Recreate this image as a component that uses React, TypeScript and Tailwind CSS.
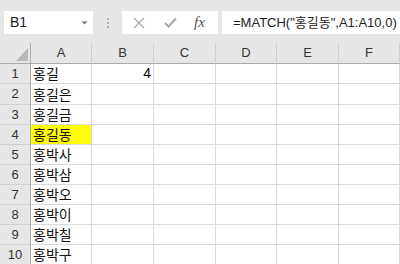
import React from "react";

const columns = ["A", "B", "C", "D", "E", "F"];

const names = [
  "홍길",
  "홍길은",
  "홍길금",
  "홍길동",
  "홍박사",
  "홍박삼",
  "홍박오",
  "홍박이",
  "홍박칠",
  "홍박구",
];

const cellFont = {
  fontFamily: '"Noto Sans CJK KR", "Noto Sans", sans-serif',
};

const Toolbar = () => {
  return (
    <div className="h-[43px] bg-[#e6e6e6] flex items-start pt-[11px] pl-[4px]">
      <div className="w-[89px] h-[23px] bg-white flex items-center justify-between pl-[6px] pr-[5px]">
        <span className="text-[14px] text-[#222] font-['Liberation_Sans',sans-serif]">
          B1
        </span>
        <svg width="7" height="4" viewBox="0 0 7 4">
          <path d="M0.5 0.5 L3.5 3.5 L6.5 0.5 Z" fill="#777" />
        </svg>
      </div>
      <div className="w-[29px] h-[23px] flex flex-col items-center justify-center gap-[2px]">
        <span className="w-[2px] h-[2px] bg-[#b0b0b0]" />
        <span className="w-[2px] h-[2px] bg-[#b0b0b0]" />
        <span className="w-[2px] h-[2px] bg-[#b0b0b0]" />
      </div>
      <div className="w-[96px] h-[23px] bg-white flex items-center pl-[11px]">
        <svg width="12" height="12" viewBox="0 0 12 12">
          <path d="M1 1 L11 11 M11 1 L1 11" stroke="#a8a8a8" strokeWidth="1.2" />
        </svg>
        <svg width="13" height="11" viewBox="0 0 13 11" className="ml-[19px]">
          <path d="M1 6 L4.5 9.5 L12 1.5" stroke="#a8a8a8" strokeWidth="2" fill="none" />
        </svg>
        <span className="ml-[17px] text-[15px] italic text-[#555] font-['Liberation_Serif',serif] leading-none">
          fx
        </span>
      </div>
      <div className="flex-1 h-[23px] bg-white ml-[4px] flex items-center pl-[11px]">
        <span
          className="text-[13px] text-[#222] whitespace-nowrap"
          style={{ fontFamily: '"Liberation Sans", "Noto Sans CJK KR", sans-serif' }}
        >
          =MATCH("홍길동",A1:A10,0)
        </span>
      </div>
    </div>
  );
};

const App = () => {
  return (
    <div className="w-[400px] h-[264px] overflow-hidden bg-white">
      <Toolbar />
      <div className="grid grid-cols-[31px_61px_62px_62px_61px_62px_61px]">
        <div className="h-[21px] bg-[#e6e6e6] border-b border-r border-[#ababab] flex items-end justify-end pr-[2px] pb-[2px]">
          <svg width="12" height="13" viewBox="0 0 12 13">
            <path d="M12 0 L12 13 L0 13 Z" fill="#b9b9b9" />
          </svg>
        </div>
        {columns.map((col) => (
          <div
            key={col}
            className="h-[21px] bg-[#e6e6e6] border-b border-b-[#ababab] border-r border-r-[#d0d0d0] flex items-center justify-center text-[13px] text-[#333] font-['Liberation_Sans',sans-serif]"
          >
            {col}
          </div>
        ))}
        {names.map((name, id: number) => {
          const h = id === 1 ? "h-[21px]" : "h-[20px]";
          return (
            <React.Fragment key={id}>
              <div
                className={`${h} bg-[#e6e6e6] border-b border-b-[#d0d0d0] border-r border-r-[#ababab] flex items-center justify-center text-[13px] text-[#333] font-['Liberation_Sans',sans-serif]`}
              >
                {id + 1}
              </div>
              <div
                className={`${h} ${id === 3 ? "bg-[#ffff00]" : "bg-white"} border-b border-r border-[#dadada] flex items-center pl-[2px] text-[14px] text-[#111]`}
                style={cellFont}
              >
                {name}
              </div>
              <div
                className={`${h} border-b border-r border-[#dadada] flex items-center justify-end pr-[2px] text-[14px] text-black font-['Liberation_Sans',sans-serif]`}
              >
                {id === 0 ? "4" : ""}
              </div>
              <div className={`${h} border-b border-r border-[#dadada]`} />
              <div className={`${h} border-b border-r border-[#dadada]`} />
              <div className={`${h} border-b border-r border-[#dadada]`} />
              <div className={`${h} border-b border-r border-[#dadada]`} />
            </React.Fragment>
          );
        })}
      </div>
    </div>
  );
};

export default App;
